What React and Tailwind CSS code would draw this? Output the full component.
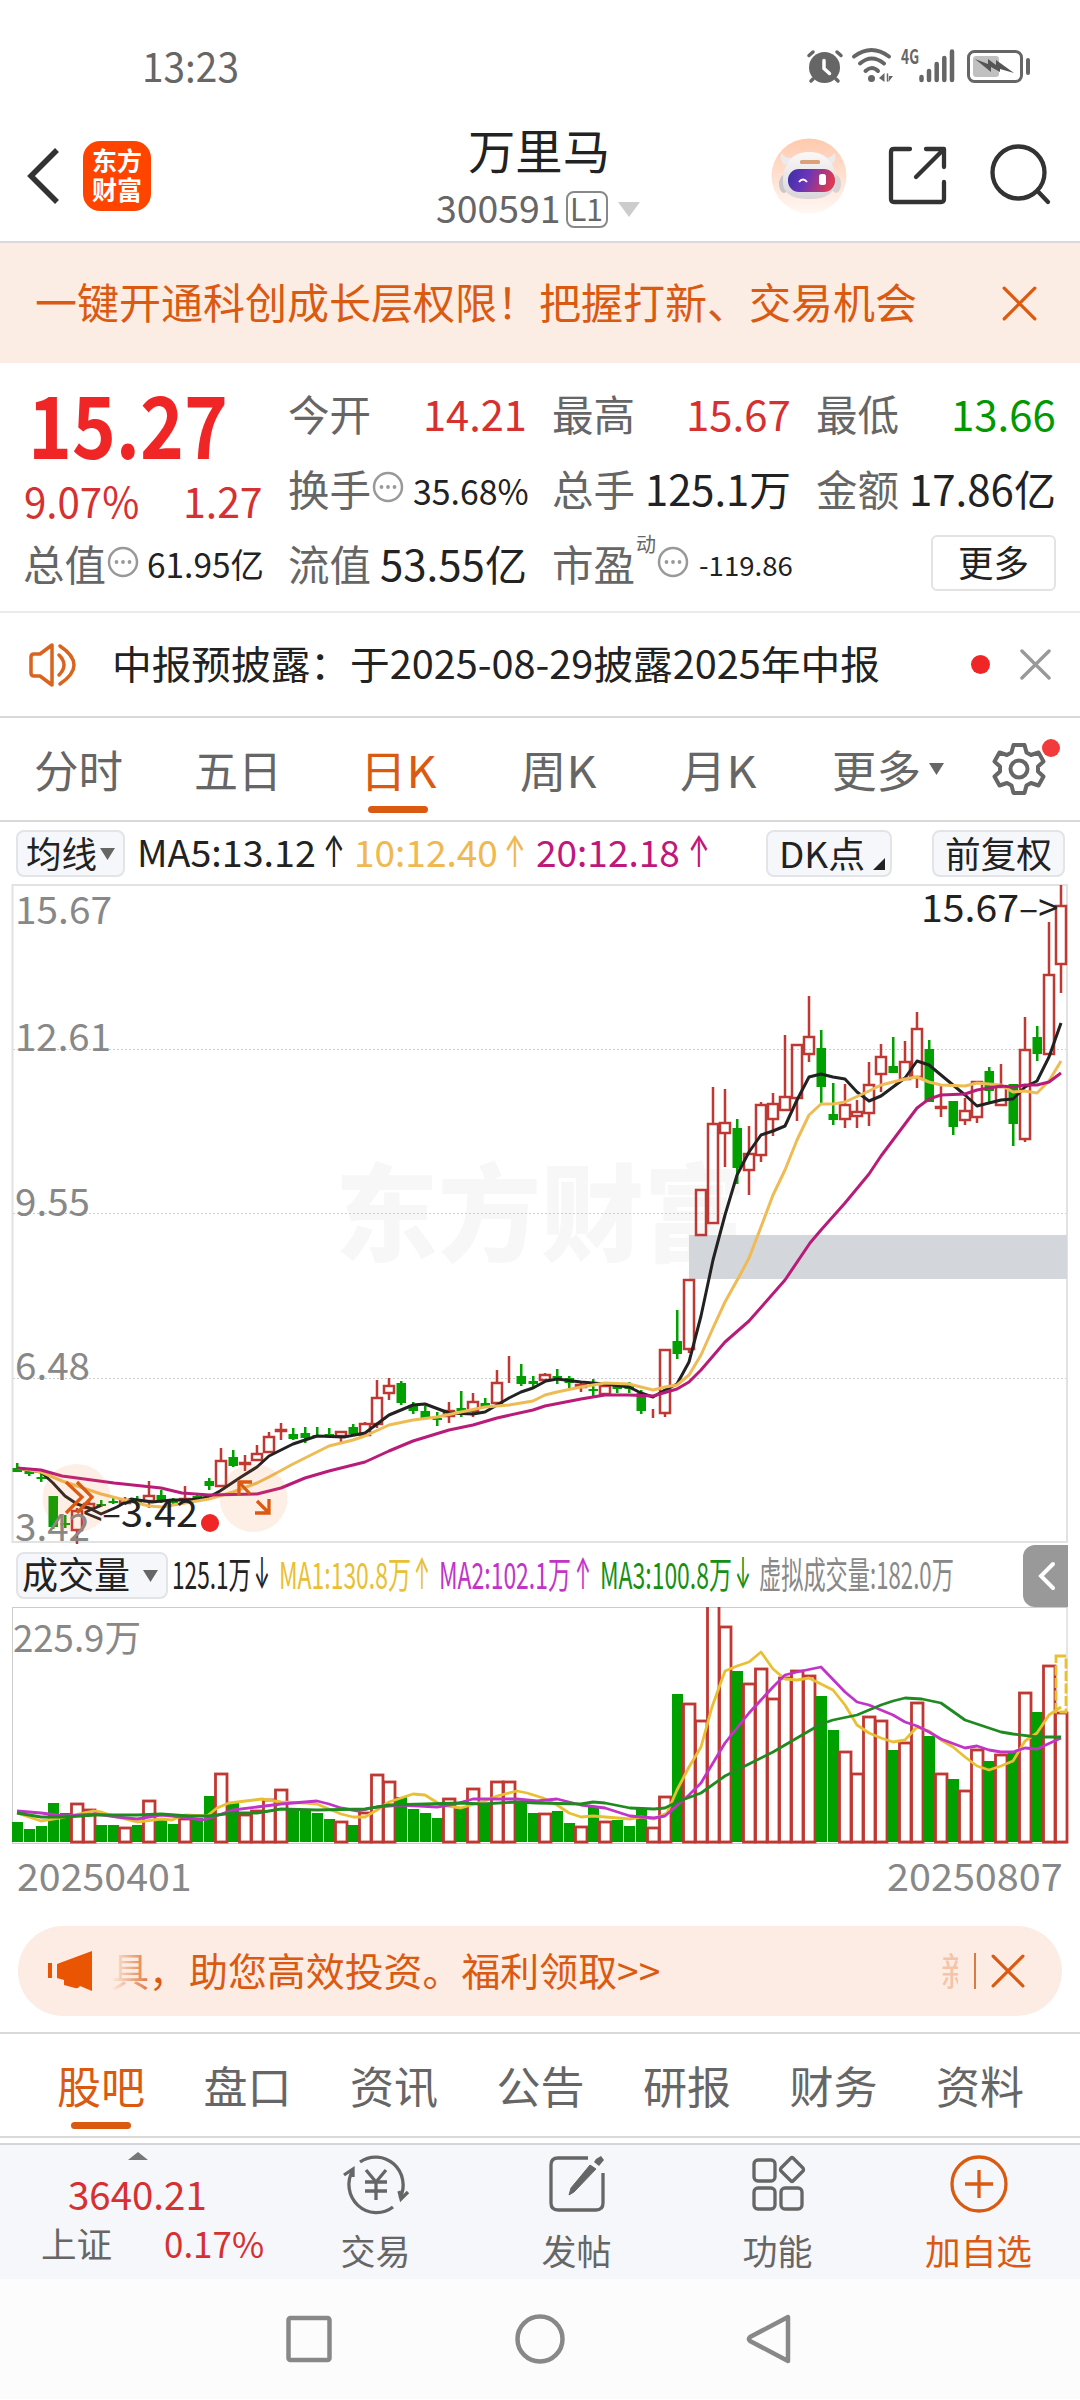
import React, { useLayoutEffect, useRef, useState } from 'react';

const RED = '#bf3833';
const GREEN = '#00a000';

// One line of text squeezed or stretched to the width of its box
const Fit = ({ className = '', children }) => {
  const ref = useRef(null);
  const [scale, setScale] = useState(1);

  useLayoutEffect(() => {
    const inner = ref.current;
    setScale(inner.parentElement.clientWidth / inner.offsetWidth);
  }, [children]);

  return (
    <span className={`block shrink-0 whitespace-nowrap leading-none ${className}`}>
      <span ref={ref} className="inline-block origin-left" style={{ transform: `translateY(-0.06em) scaleX(${scale})` }}>
        {children}
      </span>
    </span>
  );
};

const Arrow = ({ children, className = '' }) => (
  <Fit className={`font-['Inter'] text-[44px] ${className}`}>{children}</Fit>
);

const Close = ({ size, color, width = 3 }) => (
  <svg width={size} height={size} viewBox="0 0 32 32" fill="none" stroke={color} strokeWidth={width} strokeLinecap="round" className="shrink-0">
    <path d="M2 2 30 30M30 2 2 30" />
  </svg>
);

const Info = () => (
  <svg width="32" height="32" viewBox="0 0 32 32" fill="none" stroke="#999" strokeWidth="2.500" className="ml-[1px] shrink-0 -translate-y-[4px]">
    <circle cx="16" cy="16" r="14" />
    <g fill="#999" stroke="none">
      <circle cx="9.500" cy="16" r="1.900" />
      <circle cx="16" cy="16" r="1.900" />
      <circle cx="22.500" cy="16" r="1.900" />
    </g>
  </svg>
);

const Down = ({ className = '', color = '#666' }) => (
  <svg viewBox="0 0 16 13" preserveAspectRatio="none" className={`shrink-0 ${className}`}>
    <path d="M0 0H16L8 13Z" fill={color} />
  </svg>
);

const StatusBar = () => (
  <div className="flex h-[114px] items-start justify-between pl-[142px] pr-[48px] pt-[47px] text-[#666]">
    <Fit className="w-[97px] text-[40px]">13:23</Fit>
    <svg width="226" height="38" viewBox="806 46 226 38" fill="none" stroke="#666" strokeLinecap="round" className="overflow-visible">
      <circle cx="824.500" cy="66.500" r="15.500" fill="#666" stroke="none" />
      <path d="M809 54.500 813 51M841 54.500 837 51" strokeWidth="3.500" />
      <path d="M813 78 811 80M836 78 838 80" strokeWidth="3.500" />
      <path d="M824 59.500V67.500L829.500 72.500" stroke="#fff" strokeWidth="3.500" />
      <path d="M854 55.500Q871.500 42.500 889 55.500M860 62.500Q871.500 52.500 884 62.500M865.500 70Q872 64 878 70" strokeWidth="4" />
      <circle cx="871.500" cy="77.500" r="3.500" fill="#666" stroke="none" />
      <path d="M884.500 72V81L879 77ZM889 75L893 75L888.500 81Z" fill="#666" stroke="none" />
      <path d="M887.500 73V80" strokeWidth="1.500" />
      <text x="901" y="62.500" fill="#666" stroke="none" fontSize="20" fontWeight="700" textLength="18" lengthAdjust="spacingAndGlyphs">4G</text>
      <path d="M921.500 76V79M929 70V79M936.700 63V79M944.300 57V79M952 50.500V79" strokeWidth="4.500" />
      <rect x="973" y="55" width="26" height="21" rx="3" fill="#c0c0c0" stroke="none" />
      <rect x="968.500" y="50.500" width="53" height="30" rx="6" strokeWidth="3" />
      <path d="M1028 59V72" strokeWidth="4" />
      <path d="M975 58 988 63V58L996 64V59L1014 72 1000 68V71L991 66V71Z" fill="#555" stroke="none" />
    </svg>
  </div>
);

const Header = () => (
  <div className="flex h-[129px] items-start border-b-2 border-[#d9d9d9] pl-[26px]">
    <svg width="34" height="58" viewBox="0 0 34 58" fill="none" stroke="#333" strokeWidth="5.500" className="mt-[33px]">
      <path d="M31 3 5 29 31 55" />
    </svg>
    <div className="ml-[23px] mt-[27px] flex h-[70px] w-[68px] flex-col items-center justify-center gap-[3px] rounded-[17px] bg-[#ff4400] text-[26px] font-bold text-white">
      <Fit className="w-[50px]">东方</Fit>
      <Fit className="w-[50px]">财富</Fit>
    </div>
    <div className="ml-[284px] mt-[14px] flex w-[208px] flex-col items-center">
      <Fit className="w-[142px] text-[47px] text-[#222]">万里马</Fit>
      <div className="-ml-[3px] mt-[15px] flex h-[38px] items-center text-[#666]">
        <Fit className="w-[125px] text-[38px]">300591</Fit>
        <span className="ml-[5px] flex h-[37px] w-[42px] items-center justify-center rounded-[8px] border-2 border-[#888]">
          <Fit className="w-[33px] text-[31px]">L1</Fit>
        </span>
        <Down className="ml-[10px] h-[15px] w-[22px]" color="#ccc" />
      </div>
    </div>
    <svg width="76" height="76" viewBox="0 0 76 76" className="ml-[128px] mt-[24px]">
      <defs>
        <linearGradient id="halo" x1="0" y1="0" x2="0" y2="1">
          <stop offset="0" stopColor="#ffc9ad" />
          <stop offset="1" stopColor="#fff8f4" />
        </linearGradient>
        <linearGradient id="visor" x1="0" y1="0" x2="1" y2="0.2">
          <stop offset="0" stopColor="#3a2fa8" />
          <stop offset="0.45" stopColor="#6a35b8" />
          <stop offset="1" stopColor="#d93a55" />
        </linearGradient>
        <linearGradient id="head" x1="0" y1="0" x2="0" y2="1">
          <stop offset="0" stopColor="#fbf8f8" />
          <stop offset="1" stopColor="#d9d5da" />
        </linearGradient>
      </defs>
      <circle cx="38" cy="38" r="37.500" fill="url(#halo)" />
      <ellipse cx="13" cy="46" rx="5" ry="9" fill="#c9c5c9" />
      <ellipse cx="65" cy="46" rx="5" ry="9" fill="#d9d3d6" />
      <path d="M14 27C8 23 9 17 11 15 12 19 16 20 22 20ZM60 27C66 23 65 17 63 15 62 19 58 20 52 20Z" fill="#eeeaec" />
      <path d="M38 14C54 14 64 24 65 42 65 56 54 61 38 61S11 56 12 42C13 24 22 14 38 14Z" fill="url(#head)" />
      <rect x="29" y="22" width="20" height="4" rx="1.500" fill="#dba27a" />
      <rect x="17" y="31" width="47" height="23" rx="11" fill="url(#visor)" />
      <path d="M28 44Q32 39 36 44" fill="none" stroke="#fff" strokeWidth="2" />
      <rect x="48" y="36" width="7" height="11" rx="2.500" fill="#fff" />
    </svg>
    <svg width="60" height="60" viewBox="886 145 60 60" fill="none" stroke="#333" strokeWidth="4.300" strokeLinecap="round" strokeLinejoin="round" className="ml-[40px] mt-[31px]">
      <path d="M909 149H893Q890 149 890 152V199Q890 202 893 202H940Q943 202 943 199V182M925 149H943V167M942 150 915 177" />
    </svg>
    <svg width="64" height="64" viewBox="989 143 64 64" fill="none" stroke="#333" strokeWidth="4.300" strokeLinecap="round" className="ml-[42px] mt-[29px]">
      <circle cx="1018.500" cy="172.500" r="26" />
      <path d="M1037.500 191 1048 202" />
    </svg>
  </div>
);

const Stat = ({ label, value, width, color = 'text-[#222]', info, sup }) => (
  <div className="flex items-center justify-between">
    <div className="flex items-center">
      <Fit className="-ml-[1px] w-[83px] text-[42px] text-[#666]">{label}</Fit>
      {sup && <Fit className="-mt-[42px] ml-[1px] w-[20px] text-[20px] text-[#666]">{sup}</Fit>}
      {info && <Info />}
    </div>
    <Fit className={`${width} ${color}`}>{value}</Fit>
  </div>
);

const Quote = () => (
  <div className="grid h-[250px] grid-cols-[239px_238px_238px_239px] grid-rows-[75px_75px_75px] gap-x-[26px] border-b-2 border-[#ebebeb] pl-[24px] pt-[15px]">
    <div className="row-span-2 flex flex-col pt-[6px] text-[#f02626]">
      <Fit className="ml-[4px] w-[200px] text-[86px] font-bold">15.27</Fit>
      <div className="mt-[12px] flex items-center justify-between text-[42px] text-[#d63031]">
        <Fit className="w-[115px]">9.07%</Fit>
        <Fit className="w-[80px]">1.27</Fit>
      </div>
    </div>
    <Stat label="今开" value="14.21" width="w-[104px] text-[42px]" color="text-[#d63031]" />
    <Stat label="最高" value="15.67" width="w-[105px] text-[42px]" color="text-[#d63031]" />
    <Stat label="最低" value="13.66" width="w-[105px] text-[42px]" color="text-[#009900]" />
    <Stat label="换手" value="35.68%" width="w-[116px] text-[35px] mt-[2px] -mr-[2px]" info />
    <Stat label="总手" value="125.1万" width="w-[146px] text-[42px]" />
    <Stat label="金额" value="17.86亿" width="w-[147px] text-[42px]" />
    <Stat label="总值" value="61.95亿" width="w-[117px] text-[34px] -mr-[1px]" info />
    <Stat label="流值" value="53.55亿" width="w-[147px] text-[42px]" />
    <Stat label="市盈" value="-119.86" width="w-[94px] text-[27px] mt-[1px] -mr-[2px]" sup="动" info />
    <div className="flex items-center justify-end">
      <div className="mb-[6px] flex h-[56px] w-[125px] items-center justify-center rounded-[6px] border-2 border-[#e3e3e3]">
        <Fit className="w-[71px] text-[36px] text-[#222]">更多</Fit>
      </div>
    </div>
  </div>
);

const Notice = () => (
  <div className="flex h-[105px] items-center border-b-2 border-[#d9d9d9] pl-[28px] pr-[29px]">
    <svg width="54" height="46" viewBox="0 0 54 46" fill="none" stroke="#d9641e" strokeWidth="3.500" className="shrink-0">
      <path d="M24 3V43L12 34H6Q3 34 3 31V15Q3 12 6 12H12Z" strokeLinejoin="round" />
      <path d="M31 13Q41 23 31 33M32 4Q60 23 32 42" strokeLinecap="round" />
    </svg>
    <Fit className="ml-[30px] w-[768px] text-[39px] text-[#222]">中报预披露：于2025-08-29披露2025年中报</Fit>
    <span className="ml-auto mr-[30px] h-[19px] w-[19px] shrink-0 rounded-full bg-[#f02626]" />
    <Close size={31} color="#999" width={3.5} />
  </div>
);

const PeriodTabs = () => (
  <div className="flex h-[104px] items-start border-b-2 border-[#d9d9d9] pl-[34px] pt-[32px] text-[44px] text-[#666]">
    <Fit className="w-[89px]">分时</Fit>
    <Fit className="ml-[71px] w-[88px]">五日</Fit>
    <div className="ml-[78px] flex w-[76px] flex-col items-center text-[#db5a12]">
      <Fit className="w-[76px]">日K</Fit>
      <span className="mt-[12px] h-[7px] w-[60px] rounded-full bg-[#db5a12]" />
    </div>
    <Fit className="ml-[84px] w-[76px]">周K</Fit>
    <Fit className="ml-[84px] w-[76px]">月K</Fit>
    <Fit className="ml-[76px] w-[89px]">更多</Fit>
    <Down className="ml-[8px] mt-[13px] h-[12px] w-[15px]" />
    <div className="relative -mt-[9px] ml-[47px]">
      <svg width="56" height="56" viewBox="-28 -28 56 56" fill="none" stroke="#666" strokeWidth="4" strokeLinejoin="round">
        <path d="M-5.500 -24H5.500L7.500 -16.500 12 -14 19.500 -16.500 24.500 -7.500 19 -2.500V2.500L24.500 7.500 19.500 16.500 12 14 7.500 16.500 5.500 24H-5.500L-7.500 16.500 -12 14 -19.500 16.500 -24.500 7.500 -19 2.500V-2.500L-24.500 -7.500 -19.500 -16.500 -12 -14 -7.500 -16.500Z" />
        <circle r="8.500" />
      </svg>
      <span className="absolute -right-[13px] -top-[2px] h-[18px] w-[18px] rounded-full bg-[#f23a3a]" />
    </div>
  </div>
);

const pill = 'flex items-center rounded-[8px] border-2 border-[#e2e4e8] bg-[#f6f7fa] text-[#222]';

const AverageRow = () => (
  <div className="flex h-[62px] items-start pl-[16px] pt-[8px] text-[37px]">
    <div className={`${pill} h-[47px] w-[109px] pl-[8px]`}>
      <Fit className="w-[71px] text-[36px]">均线</Fit>
      <Down className="ml-[3px] h-[12px] w-[15px]" />
    </div>
    <div className="ml-[12px] flex h-[47px] items-center">
      <Fit className="w-[179px] text-[#222]">MA5:13.12</Fit>
      <Arrow className="ml-[7px] w-[22px] text-[#222]">↑</Arrow>
      <Fit className="ml-[9px] w-[144px] text-[#f0b850]">10:12.40</Fit>
      <Arrow className="ml-[6px] w-[22px] text-[#f0b850]">↑</Arrow>
      <Fit className="ml-[10px] w-[144px] text-[#c0177c]">20:12.18</Fit>
      <Arrow className="ml-[8px] w-[22px] text-[#c0177c]">↑</Arrow>
    </div>
    <div className={`${pill} ml-[56px] h-[47px] w-[126px] pl-[11px]`}>
      <Fit className="w-[86px] text-[36px]">DK点</Fit>
      <svg width="12" height="12" className="ml-[8px] mt-[20px] shrink-0">
        <path d="M12 0V12H0Z" fill="#222" />
      </svg>
    </div>
    <div className={`${pill} ml-[40px] h-[47px] w-[133px] justify-center`}>
      <Fit className="w-[107px] text-[36px]">前复权</Fit>
    </div>
  </div>
);

// up/down, high, body top, body bottom, low
const candles = [
  ['d', 1463, 1468, 1472, 1472], ['d', 1470, 1471, 1474, 1476], ['d', 1473, 1477, 1479, 1482], ['d', 1496, 1496, 1527, 1529],
  ['d', 1515, 1523, 1525, 1528], ['u', 1508, 1511, 1530, 1544], ['u', 1500, 1504, 1508, 1510], ['d', 1500, 1504, 1506, 1507],
  ['d', 1498, 1501, 1503, 1504], ['u', 1497, 1500, 1503, 1504], ['d', 1496, 1499, 1503, 1506], ['u', 1481, 1496, 1501, 1508],
  ['d', 1490, 1495, 1501, 1503], ['d', 1498, 1501, 1503, 1505], ['u', 1486, 1499, 1500, 1502], ['d', 1494, 1496, 1498, 1499],
  ['d', 1478, 1481, 1486, 1490], ['u', 1448, 1461, 1486, 1487], ['d', 1450, 1457, 1466, 1467], ['u', 1455, 1463, 1464, 1471],
  ['u', 1445, 1454, 1460, 1461], ['u', 1432, 1437, 1452, 1452], ['u', 1423, 1430, 1431, 1440], ['d', 1428, 1434, 1439, 1440],
  ['d', 1427, 1433, 1438, 1443], ['d', 1427, 1435, 1437, 1437], ['d', 1428, 1434, 1436, 1437], ['u', 1431, 1432, 1436, 1442],
  ['d', 1424, 1427, 1434, 1435], ['u', 1422, 1424, 1435, 1436], ['u', 1380, 1398, 1424, 1428], ['u', 1378, 1386, 1393, 1400],
  ['d', 1381, 1383, 1403, 1405], ['d', 1402, 1405, 1411, 1414], ['d', 1406, 1411, 1418, 1419], ['d', 1412, 1418, 1420, 1426],
  ['u', 1402, 1411, 1416, 1423], ['d', 1391, 1408, 1411, 1417], ['u', 1393, 1402, 1411, 1417], ['d', 1398, 1403, 1407, 1408],
  ['u', 1370, 1383, 1403, 1404], ['u', 1356, 1378, 1378, 1383], ['d', 1364, 1376, 1384, 1386], ['d', 1376, 1381, 1384, 1389],
  ['u', 1373, 1375, 1380, 1380], ['d', 1369, 1376, 1378, 1384], ['d', 1376, 1378, 1383, 1388], ['u', 1383, 1385, 1387, 1392],
  ['d', 1379, 1389, 1391, 1396], ['u', 1385, 1386, 1394, 1394], ['d', 1382, 1385, 1389, 1393], ['d', 1382, 1385, 1389, 1393],
  ['d', 1390, 1393, 1411, 1414], ['u', 1409, 1414, 1414, 1418], ['u', 1350, 1350, 1413, 1417], ['d', 1310, 1341, 1354, 1359],
  ['u', 1280, 1280, 1349, 1353], ['u', 1190, 1190, 1235, 1235], ['u', 1087, 1124, 1223, 1223], ['u', 1089, 1123, 1133, 1167],
  ['d', 1119, 1128, 1168, 1184], ['u', 1126, 1154, 1170, 1195], ['u', 1102, 1105, 1155, 1162], ['u', 1093, 1104, 1119, 1136],
  ['u', 1035, 1097, 1110, 1110], ['u', 1044, 1045, 1098, 1121], ['u', 996, 1037, 1054, 1062], ['d', 1030, 1048, 1087, 1103],
  ['d', 1083, 1114, 1120, 1125], ['u', 1084, 1105, 1119, 1128], ['u', 1100, 1112, 1116, 1128], ['u', 1062, 1085, 1113, 1126],
  ['u', 1044, 1057, 1074, 1092], ['d', 1037, 1066, 1073, 1073], ['u', 1041, 1062, 1079, 1080], ['u', 1012, 1029, 1077, 1088],
  ['d', 1040, 1049, 1102, 1102], ['u', 1086, 1107, 1108, 1117], ['d', 1101, 1101, 1127, 1135], ['u', 1098, 1111, 1120, 1125],
  ['u', 1081, 1082, 1117, 1123], ['d', 1067, 1071, 1091, 1103], ['u', 1064, 1087, 1105, 1105], ['d', 1084, 1084, 1124, 1146],
  ['u', 1017, 1050, 1139, 1142], ['d', 1026, 1037, 1054, 1061], ['u', 922, 975, 1054, 1054], ['u', 885, 906, 964, 993],
];

const volumes = [
  1822, 1829, 1826, 1803, 1813, 1803, 1809, 1825, 1825, 1827, 1825, 1800, 1820, 1824, 1818, 1818, 1796, 1773, 1802, 1814,
  1810, 1799, 1789, 1808, 1811, 1813, 1819, 1821, 1825, 1812, 1774, 1781, 1797, 1809, 1813, 1818, 1798, 1808, 1788, 1805,
  1781, 1781, 1802, 1813, 1813, 1811, 1823, 1826, 1806, 1821, 1820, 1826, 1809, 1827, 1796, 1694, 1703, 1720, 1600, 1626,
  1671, 1683, 1668, 1698, 1677, 1670, 1675, 1696, 1730, 1751, 1773, 1716, 1720, 1750, 1742, 1702, 1736, 1773, 1779, 1790,
  1749, 1761, 1754, 1751, 1692, 1712, 1665, 1712,
];

const ma5 = '17,1468 41,1472 53,1483 65,1496 77,1504 89,1508 101,1514 117,1507 131,1499 152,1502 172,1500 189,1500 209,1497 220,1491 241,1477 257,1467 269,1456 293,1444 317,1436 344,1437 365,1433 377,1424 389,1415 413,1405 425,1404 449,1413 473,1414 485,1412 509,1398 521,1392 533,1388 546,1381 557,1379 581,1382 605,1384 629,1387 641,1393 653,1397 665,1390 677,1384 689,1362 701,1316 713,1260 725,1215 737,1175 749,1152 761,1135 773,1131 785,1126 797,1100 809,1077 821,1074 833,1077 845,1079 857,1092 869,1101 881,1096 893,1087 905,1078 917,1061 929,1065 941,1075 953,1085 965,1095 977,1106 989,1103 1001,1100 1013,1099 1025,1087 1037,1081 1049,1057 1061,1023';
const ma10 = '17,1468 41,1472 62,1481 83,1488 101,1494 125,1500 149,1506 162,1507 185,1503 209,1499 233,1492 257,1483 269,1477 293,1464 317,1452 329,1446 353,1440 365,1436 389,1425 413,1420 437,1417 461,1412 485,1407 509,1405 521,1403 533,1401 545,1395 557,1392 581,1387 605,1383 629,1384 653,1390 665,1387 677,1385 689,1375 701,1355 713,1328 725,1302 740,1275 749,1258 761,1227 773,1195 785,1170 797,1140 809,1115 821,1104 833,1104 845,1102 869,1091 881,1085 905,1079 917,1077 929,1082 941,1085 965,1086 977,1083 1001,1085 1013,1092 1025,1091 1037,1093 1049,1081 1061,1061';
const ma20 = '17,1468 41,1470 62,1476 77,1478 114,1483 161,1488 182,1493 209,1495 257,1494 281,1488 305,1478 329,1471 365,1462 389,1451 413,1441 449,1430 473,1425 497,1418 533,1410 545,1406 581,1399 605,1395 629,1395 653,1396 677,1389 689,1382 701,1370 725,1342 749,1321 785,1280 810,1243 821,1230 845,1203 869,1174 881,1156 905,1124 917,1108 929,1099 941,1095 965,1094 977,1090 1001,1086 1013,1087 1025,1085 1037,1085 1049,1082 1061,1073';
const vol5 = '17,1813 41,1821 65,1817 83,1813 93,1811 101,1812 117,1817 137,1822 161,1819 172,1820 185,1815 207,1816 217,1808 229,1803 262,1799 281,1802 305,1803 317,1804 329,1809 341,1814 353,1817 365,1817 377,1810 389,1802 413,1794 425,1795 441,1805 461,1808 485,1801 497,1796 517,1791 527,1793 543,1798 557,1805 569,1813 581,1817 593,1816 630,1819 641,1817 654,1819 667,1813 677,1790 689,1767 701,1747 712,1707 725,1671 737,1666 749,1662 761,1652 773,1669 785,1679 797,1680 809,1678 833,1690 845,1705 857,1725 869,1733 881,1738 893,1742 905,1740 917,1727 929,1731 941,1740 953,1747 965,1757 977,1766 989,1770 1001,1766 1013,1761 1025,1741 1037,1733 1049,1715 1061,1707';
const vol10 = '17,1811 41,1813 65,1816 96,1814 117,1817 137,1819 161,1815 182,1817 203,1820 213,1817 233,1810 257,1807 281,1804 317,1801 329,1804 341,1808 358,1811 377,1807 401,1805 437,1807 455,1804 473,1799 517,1799 537,1801 557,1799 581,1805 605,1808 630,1816 654,1818 665,1816 689,1795 701,1783 725,1743 749,1713 761,1700 773,1687 785,1675 797,1672 821,1667 845,1692 857,1702 869,1705 893,1715 905,1722 917,1726 929,1732 941,1739 965,1748 977,1746 989,1750 1001,1752 1013,1752 1025,1748 1037,1749 1061,1738';
const vol20 = '17,1813 41,1817 65,1817 96,1815 137,1815 161,1814 189,1816 209,1816 233,1813 257,1813 281,1809 317,1810 365,1809 389,1805 425,1804 461,1803 482,1804 517,1802 537,1803 581,1804 593,1802 605,1803 630,1808 654,1809 665,1808 677,1802 701,1793 725,1776 749,1764 773,1752 797,1738 821,1724 833,1720 857,1715 881,1705 893,1701 905,1698 922,1699 941,1703 965,1720 989,1728 1001,1732 1013,1734 1037,1737 1061,1737';

const xAt = (i) => 17.3 + i * 12;

const Candle = ({ data, i }) => {
  const [dir, high, top, bottom, low] = data;
  const x = Math.round(xAt(i));
  if (dir === 'd') {
    return (
      <g fill={GREEN}>
        <rect x={x - 1} y={high} width="2.500" height={low - high} />
        <rect x={x - 4.5} y={top} width="9.500" height={bottom - top} />
      </g>
    );
  }
  return (
    <g stroke={RED} strokeWidth="2.500" fill="none">
      <path d={`M${x} ${high}V${top}M${x} ${bottom}V${low}`} />
      <rect x={x - 5} y={top} width="10" height={bottom - top} />
    </g>
  );
};

const PriceChart = () => (
  <svg width="1080" height="660" viewBox="0 884 1080 660" fill="none" className="block" fontSize="38">
    <text x="335" y="1253" fill="#f7f7f7" fontSize="106" fontWeight="900" textLength="412" lengthAdjust="spacingAndGlyphs">东方财富</text>
    <path d="M13 1049.500H1067M13 1213.500H1067M13 1378.500H1067" stroke="#ccc" strokeDasharray="2 2" />
    <rect x="12.500" y="885" width="1054.500" height="657" stroke="#e2e2e2" strokeWidth="2" />
    <rect x="689" y="1235" width="378" height="44" fill="#d3d6db" />
    {candles.map((c, i) => <Candle key={i} data={c} i={i} />)}
    <g strokeWidth="3" strokeLinejoin="round">
      <polyline points={ma5} stroke="#222" />
      <polyline points={ma10} stroke="#efbb55" />
      <polyline points={ma20} stroke="#b91c78" />
    </g>
    <g fill="#888">
      <text x="15" y="924" textLength="97" lengthAdjust="spacingAndGlyphs">15.67</text>
      <text x="15" y="1051" textLength="96" lengthAdjust="spacingAndGlyphs">12.61</text>
      <text x="15" y="1216" textLength="75" lengthAdjust="spacingAndGlyphs">9.55</text>
      <text x="15" y="1380" textLength="75" lengthAdjust="spacingAndGlyphs">6.48</text>
      <text x="15" y="1541" textLength="75" lengthAdjust="spacingAndGlyphs">3.42</text>
    </g>
    <g fill="#222">
      <text x="921" y="922" textLength="98" lengthAdjust="spacingAndGlyphs">15.67</text>
      <text x="1019" y="922" textLength="39" lengthAdjust="spacingAndGlyphs">–&gt;</text>
      <text x="83" y="1527" textLength="38" lengthAdjust="spacingAndGlyphs">&lt;–</text>
      <text x="121" y="1527" textLength="77" lengthAdjust="spacingAndGlyphs">3.42</text>
    </g>
    <circle cx="210" cy="1523" r="9" fill="#f02626" />
    <g fill="#f07030" fillOpacity="0.12">
      <circle cx="76.500" cy="1498" r="34" />
      <circle cx="253.500" cy="1498" r="34" />
    </g>
    <g stroke="#db5a12" strokeWidth="3.300">
      <path d="M66 1482 82 1497 66 1513M77 1482 92 1497 77 1513" />
      <path d="M252 1482H239V1496M239 1482 250 1494M255 1513H269V1499M269 1513 257 1501" />
    </g>
  </svg>
);

const VolumeRow = () => (
  <div className="flex h-[63px] items-start pl-[16px] text-[37px]">
    <div className={`${pill} mt-[8px] h-[47px] w-[152px] pl-[4px]`}>
      <Fit className="w-[108px] text-[37px]">成交量</Fit>
      <Down className="ml-[13px] h-[12px] w-[15px]" />
    </div>
    <div className="ml-[4px] mt-[8px] flex h-[47px] items-center">
      <Fit className="w-[79px] text-[#222]">125.1万</Fit>
      <Arrow className="ml-[3px] w-[16px] text-[#222]">↓</Arrow>
      <Fit className="ml-[9px] w-[132px] text-[#e9c032]">MA1:130.8万</Fit>
      <Arrow className="ml-[3px] w-[16px] text-[#e9c032]">↑</Arrow>
      <Fit className="ml-[9px] w-[132px] text-[#c234c8]">MA2:102.1万</Fit>
      <Arrow className="ml-[4px] w-[16px] text-[#c234c8]">↑</Arrow>
      <Fit className="ml-[9px] w-[132px] text-[#159015]">MA3:100.8万</Fit>
      <Arrow className="ml-[3px] w-[16px] text-[#159015]">↓</Arrow>
      <Fit className="ml-[8px] w-[195px] text-[#888]">虚拟成交量:182.0万</Fit>
    </div>
    <div className="ml-auto mr-[12px] mt-[1px] flex h-[62px] w-[45px] items-center justify-center rounded-l-[12px] bg-[#999]">
      <svg width="20" height="32" viewBox="0 0 20 32" fill="none" stroke="#fff" strokeWidth="4" strokeLinecap="round" className="ml-[3px]">
        <path d="M16 4 4 16 16 28" />
      </svg>
    </div>
  </div>
);

const VolumeChart = () => (
  <svg width="1080" height="237" viewBox="0 1607 1080 237" fill="none" className="block">
    <rect x="12.500" y="1607.500" width="1054.500" height="236" stroke="#ccc" />
    {volumes.map((top, i) => {
      const x = Math.round(xAt(i));
      return candles[i][0] === 'd'
        ? <rect key={i} x={x - 5} y={top} width="11" height={1842 - top} fill={GREEN} />
        : <rect key={i} x={x - 5.5} y={top + 1} width="11.500" height={1841 - top} stroke={RED} strokeWidth="2.800" />;
    })}
    <rect x="1056" y="1656" width="10" height="56" stroke="#e9c032" strokeWidth="2.800" strokeDasharray="10 2.500" />
    <g strokeWidth="2.800" strokeLinejoin="round">
      <polyline points={vol5} stroke="#e9c032" />
      <polyline points={vol10} stroke="#c234c8" />
      <polyline points={vol20} stroke="#1f8a1f" />
    </g>
    <text x="13" y="1652" fill="#888" fontSize="37" textLength="128" lengthAdjust="spacingAndGlyphs">225.9万</text>
  </svg>
);

const Promo = () => (
  <div className="mx-[18px] mt-[18px] flex h-[90px] items-center overflow-hidden rounded-[45px] bg-[#fcece3] pl-[29px] pr-[37px]">
    <svg width="48" height="42" viewBox="0 0 48 42" fill="#ea5504" className="shrink-0">
      <path d="M1 13H5V28H1ZM10 14 45 1V41L33 36Q31 39 28 38L17 35V30L10 28Z" />
    </svg>
    <div className="relative ml-[16px]">
      <Fit className="w-[38px] text-[39px] text-[#db5a12]">具</Fit>
      <span className="absolute -inset-y-1 left-0 w-[38px] bg-gradient-to-r from-[#fcece3] to-[#fcece3]/20" />
    </div>
    <Fit className="w-[38px] text-[39px] text-[#db5a12]">，</Fit>
    <Fit className="ml-[2px] w-[471px] text-[39px] text-[#db5a12]">助您高效投资。福利领取&gt;&gt;</Fit>
    <div className="ml-auto h-[50px] w-[17px] overflow-hidden pt-[6px]">
      <Fit className="w-[38px] text-[39px] text-[#f5c4a8]">新</Fit>
    </div>
    <span className="ml-[16px] mr-[15px] h-[36px] w-[2px] bg-[#db7a44]" />
    <Close size={34} color="#db5a12" />
  </div>
);

const sections = ['股吧', '盘口', '资讯', '公告', '研报', '财务', '资料'];

const SectionTabs = () => (
  <div className="mt-[16px] flex h-[106px] items-start border-b-2 border-t-2 border-[#d9d9d9] pl-[57px] pt-[32px] text-[44px] text-[#666]">
    {sections.map((name, i) => (
      <div key={name} className={`mr-[58.500px] flex w-[88px] shrink-0 flex-col items-center ${i === 0 ? 'text-[#db5a12]' : ''}`}>
        <Fit className="w-[88px]">{name}</Fit>
        {i === 0 && <span className="mt-[12px] h-[7px] w-[60px] rounded-full bg-[#db5a12]" />}
      </div>
    ))}
  </div>
);

const Action = ({ label, width = 'w-[70px]', color = 'text-[#666]', children }) => (
  <div className={`flex w-[201px] flex-col items-center text-[35px] ${color}`}>
    <svg width="70" height="60" viewBox="-35 -30 70 60" fill="none" stroke="currentColor" strokeWidth="3.300" className="overflow-visible">
      {children}
    </svg>
    <Fit className={`mt-[20px] ${width}`}>{label}</Fit>
  </div>
);

const BottomBar = () => (
  <div className="mt-[5px] flex h-[136px] items-start border-t-2 border-[#d3d5da] bg-[#f6f7fa]">
    <div className="w-[275px] pt-[7px] text-[#d63031]">
      <svg width="20" height="8" className="ml-[128px] block">
        <path d="M10 0 20 8H0Z" fill="#777" />
      </svg>
      <Fit className="ml-[68px] mt-[16px] w-[139px] text-[39px]">3640.21</Fit>
      <div className="mt-[11px] flex items-center pl-[41px]">
        <Fit className="w-[71px] text-[35px] text-[#666]">上证</Fit>
        <Fit className="ml-[52px] w-[100px] text-[36px]">0.17%</Fit>
      </div>
    </div>
    <div className="flex pt-[9px]">
      <Action label="交易">
        <path d="M-16 -22A27.500 28 0 0 1 24 14M17 23A27.500 28 0 0 1 -23 -14" />
        <path d="M-32 -9 -23 -15V-7M32 8 25 15 23 7" />
        <path d="M-10 -14 0 -2 10 -14M0 -2V16M-11 -2H11M-11 7H11" />
      </Action>
      <Action label="发帖">
        <path d="M11 -26H-19Q-26 -26 -26 -19V19Q-26 26 -19 26H19Q26 26 26 19V-11" />
        <path d="M13 -19 19 -15 -3 8 -8 11 -6 4Z" fill="currentColor" strokeWidth="1" />
        <path d="M19 -25 24 -28 27 -24 22 -18 17 -22Z" fill="currentColor" stroke="none" />
      </Action>
      <Action label="功能">
        <rect x="-24" y="-24" width="21" height="21" rx="4" />
        <rect x="-24" y="4" width="21" height="21" rx="4" />
        <rect x="3" y="4" width="21" height="21" rx="4" />
        <path d="M13 -26Q14 -27 15 -26L25 -16Q26 -14 25 -13L15 -3Q14 -2 13 -3L3 -13Q2 -14 3 -16Z" />
      </Action>
      <Action label="加自选" width="w-[107px]" color="text-[#db5a12]">
        <circle r="27" />
        <path d="M0 -14V14M-14 0H14" />
      </Action>
    </div>
  </div>
);

const SystemNav = () => (
  <div className="flex h-[120px] items-center bg-[#fcfcfc] pl-[286px]">
    <svg width="506" height="50" viewBox="286 2315 506 50" fill="none" stroke="#888" strokeWidth="4.500" strokeLinejoin="round">
      <rect x="288.500" y="2319" width="41" height="42" rx="2" />
      <circle cx="540" cy="2340" r="22.500" />
      <path d="M788 2318V2362L750 2342Q748 2340 750 2338Z" />
    </svg>
  </div>
);

const App = () => {
  return (
    <div className="h-[2400px] w-[1080px] overflow-hidden bg-white font-['Noto_Sans_CJK_SC',sans-serif]">
      <StatusBar />
      <Header />
      <div className="flex h-[120px] items-center justify-between bg-[#fcede4] pl-[35px] pr-[43px]">
        <Fit className="mt-[2px] w-[882px] text-[42px] text-[#db5a12]">一键开通科创成长层权限！把握打新、交易机会</Fit>
        <Close size={35} color="#db5a12" />
      </div>
      <Quote />
      <Notice />
      <PeriodTabs />
      <AverageRow />
      <PriceChart />
      <VolumeRow />
      <VolumeChart />
      <div className="flex h-[64px] items-center justify-between pl-[17px] pr-[17px] pt-[2px] text-[38px] text-[#888]">
        <Fit className="w-[175px]">20250401</Fit>
        <Fit className="w-[176px]">20250807</Fit>
      </div>
      <Promo />
      <SectionTabs />
      <BottomBar />
      <SystemNav />
    </div>
  );
};

export default App;
